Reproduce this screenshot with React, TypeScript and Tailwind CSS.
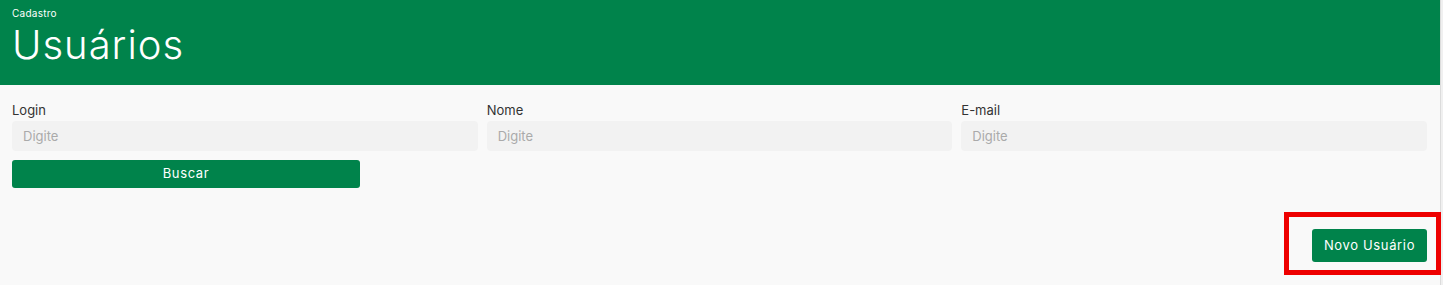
import React from 'react'

const FONT = { fontFamily: 'Inter, "Open Sans", Roboto, sans-serif' }

const FIELDS = ['Login', 'Nome', 'E-mail']

export default function App() {
  return (
    <div className="relative flex w-[1443px] h-[285px] overflow-hidden bg-[#f9f9f9]" style={FONT}>
      <div className="flex-1 flex flex-col">
        <header className="h-[85px] bg-[#00834b] px-3 pt-[6px] text-white">
          <p className="text-[10px] leading-[14px] tracking-wide">Cadastro</p>
          <h1 className="text-[40px] leading-[50px] font-light tracking-wide">Usuários</h1>
        </header>

        <main className="px-3 pt-[16px] pr-[13px]">
          <div className="grid grid-cols-3 gap-[9px]">
            {FIELDS.map(f => (
              <div key={f}>
                <label className="block text-[13px] leading-[18px] text-[#333] mb-[2px]">{f}</label>
                <input
                  placeholder="Digite"
                  className="w-full h-[30px] rounded bg-[#f2f2f2] px-[11px] text-[13px] placeholder:text-[#aaa] focus:outline-none"
                />
              </div>
            ))}
          </div>
          <button className="mt-[9px] w-[348px] h-[28px] rounded-[3px] bg-[#00834b] text-white text-[13px] tracking-wider">
            Buscar
          </button>

          <div className="flex justify-end mt-[41px]">
            <button className="w-[115px] h-[33px] rounded-[3px] bg-[#00834b] text-white text-[13px] tracking-wider">
              Novo Usuário
            </button>
          </div>
        </main>
      </div>
      <div className="w-[3px] border-l border-[#dcdcdc] bg-[#f0f0f0]" />

      <div className="absolute left-[1284px] top-[212px] w-[157px] h-[63px] border-[5px] border-[#ee0000] pointer-events-none" />
    </div>
  )
}
